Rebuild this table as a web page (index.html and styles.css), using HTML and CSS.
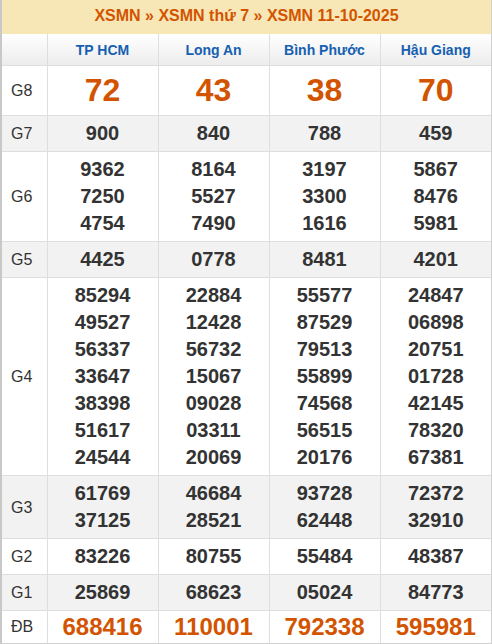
FILE: index.html
```html
<!DOCTYPE html>
<html>
<head>
<meta charset="utf-8">
<link rel="stylesheet" href="styles.css">
</head>
<body>
<div class="box">
  <div class="title">XSMN » XSMN thứ 7 » XSMN 11-10-2025</div>
  <table class="kq">
    <colgroup>
      <col class="c-label"><col><col><col><col>
    </colgroup>
    <thead>
      <tr class="head">
        <th></th><th>TP HCM</th><th>Long An</th><th>Bình Phước</th><th>Hậu Giang</th>
      </tr>
    </thead>
    <tbody>
      <tr class="g8"><td class="lbl">G8</td><td>72</td><td>43</td><td>38</td><td>70</td></tr>
      <tr class="alt"><td class="lbl">G7</td><td>900</td><td>840</td><td>788</td><td>459</td></tr>
      <tr><td class="lbl">G6</td>
        <td><div>9362</div><div>7250</div><div>4754</div></td>
        <td><div>8164</div><div>5527</div><div>7490</div></td>
        <td><div>3197</div><div>3300</div><div>1616</div></td>
        <td><div>5867</div><div>8476</div><div>5981</div></td></tr>
      <tr class="alt"><td class="lbl">G5</td><td>4425</td><td>0778</td><td>8481</td><td>4201</td></tr>
      <tr><td class="lbl">G4</td>
        <td><div>85294</div><div>49527</div><div>56337</div><div>33647</div><div>38398</div><div>51617</div><div>24544</div></td>
        <td><div>22884</div><div>12428</div><div>56732</div><div>15067</div><div>09028</div><div>03311</div><div>20069</div></td>
        <td><div>55577</div><div>87529</div><div>79513</div><div>55899</div><div>74568</div><div>56515</div><div>20176</div></td>
        <td><div>24847</div><div>06898</div><div>20751</div><div>01728</div><div>42145</div><div>78320</div><div>67381</div></td></tr>
      <tr class="alt"><td class="lbl">G3</td>
        <td><div>61769</div><div>37125</div></td>
        <td><div>46684</div><div>28521</div></td>
        <td><div>93728</div><div>62448</div></td>
        <td><div>72372</div><div>32910</div></td></tr>
      <tr><td class="lbl">G2</td><td>83226</td><td>80755</td><td>55484</td><td>48387</td></tr>
      <tr class="alt"><td class="lbl">G1</td><td>25869</td><td>68623</td><td>05024</td><td>84773</td></tr>
      <tr class="db"><td class="lbl">ĐB</td><td>688416</td><td>110001</td><td>792338</td><td>595981</td></tr>
    </tbody>
  </table>
</div>
</body>
</html>
```

FILE: styles.css
```css
html, body {
  margin: 0;
  padding: 0;
  background: #fff;
}
body {
  font-family: "Liberation Sans", Arial, sans-serif;
  width: 492px;
}
.box {
  width: 492px;
  box-sizing: border-box;
  border-left: 2px solid #c8c8c8;
  border-right: 1px solid #d0d0d0;
  border-bottom: 1px solid #d0d0d0;
}
.title {
  height: 34px;
  line-height: 32px;
  background: #f7e7b6;
  color: #d35400;
  font-weight: bold;
  font-size: 16px;
  text-align: center;
}
.kq {
  width: 100%;
  border-collapse: collapse;
  table-layout: fixed;
}
.c-label {
  width: 45px;
}
.kq th, .kq td {
  border: 1px solid #dedede;
  text-align: center;
  padding: 0;
}
.kq tr > :first-child { border-left: none; }
.kq tr > :last-child { border-right: none; }
.kq tbody tr:last-child td { border-bottom: none; }
.head th {
  border-top: none;
  height: 31px;
  background: linear-gradient(#ffffff, #ececec);
  color: #1560b0;
  font-size: 14px;
  font-weight: bold;
}
.kq td {
  padding: 4px 0;
  font-size: 20px;
  line-height: 27px;
  font-weight: bold;
  color: #333;
}
.kq td.lbl {
  font-size: 16px;
  font-weight: normal;
  color: #333;
  text-align: left;
  padding-left: 9px;
}
.alt td {
  background: #f2f2f2;
}
.g8 td {
  font-size: 32px;
  line-height: 41px;
  color: #d35400;
}
.db td {
  font-size: 24px;
  line-height: 24px;
  color: #d35400;
}
.g8 td.lbl, .db td.lbl {
  font-size: 16px;
  color: #333;
}
```
